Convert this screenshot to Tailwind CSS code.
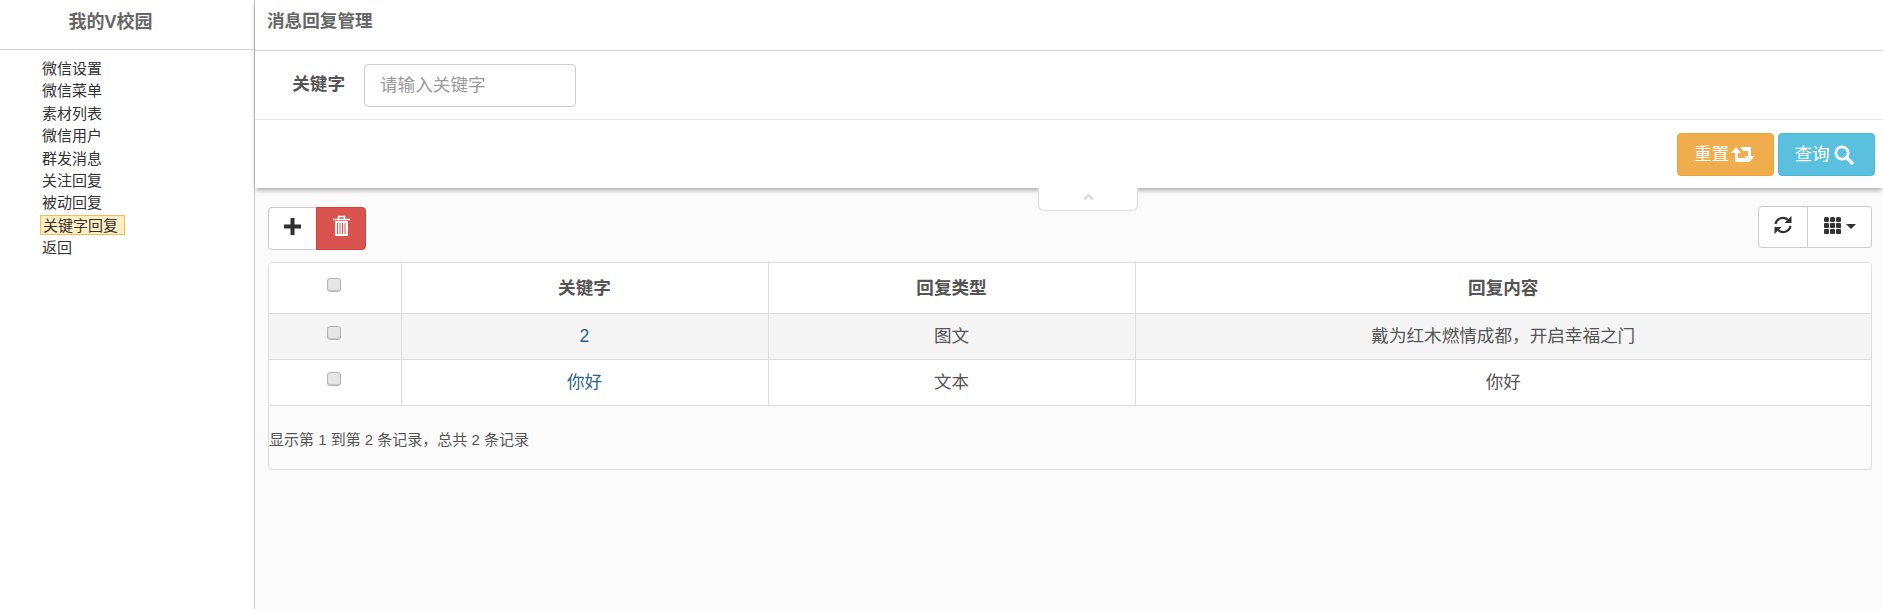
<!DOCTYPE html>
<html lang="zh">
<head>
  <meta charset="UTF-8" />
  <title>消息回复管理</title>
  <script src="https://cdn.jsdelivr.net/npm/@tailwindcss/browser@4"></script>
</head>
<body class="flex h-[609px] w-[1883px] overflow-hidden bg-white font-['Liberation_Sans','Noto_Sans_CJK_SC',sans-serif] text-[#333]">
  <!-- Sidebar -->
  <aside class="h-full w-[255px] shrink-0 border-r border-[#ccc] bg-white">
    <h2 class="h-[50px] border-b border-[#d4d4d4] pr-[33px] text-center text-[18px] leading-[44px] font-bold text-[#666]">我的V校园</h2>
    <ul class="pt-[8px] pl-[42px] text-[15px] leading-[22.4px] text-[#333]">
      <li>微信设置</li>
      <li>微信菜单</li>
      <li>素材列表</li>
      <li>微信用户</li>
      <li>群发消息</li>
      <li>关注回复</li>
      <li>被动回复</li>
      <li><span class="-ml-[2px] inline-block h-[20px] border border-[#ffb951] bg-[#ffeec2] pr-[6px] pl-[2px] leading-[19px]">关键字回复</span></li>
      <li>返回</li>
    </ul>
  </aside>

  <!-- Main Content -->
  <main class="flex h-full min-w-0 flex-1 flex-col bg-[#fbfbfb]">
    <div class="relative z-10 bg-white shadow-[0_3px_5px_-1px_rgba(0,0,0,0.35)]">
      <h1 class="h-[51px] border-b border-[#d4d4d4] pl-[12px] text-[17.6px] leading-[42px] font-bold text-[#666]">消息回复管理</h1>
      <div class="flex h-[69px] items-start border-b border-[#e5e5e5] pt-[13px]">
        <label class="w-[90px] text-right text-[17.6px] leading-[40px] font-bold text-[#555]">关键字</label>
        <input type="text" placeholder="请输入关键字" class="ml-[19px] h-[43px] w-[212px] rounded-[4px] border border-[#ccc] bg-white px-[15px] text-[17.6px] placeholder:text-[#999]" />
      </div>
      <div class="flex h-[68px] justify-end gap-[4px] pt-[13px] pr-[8px]">
        <button class="flex h-[43px] w-[97px] items-center justify-center gap-[2px] rounded-[4px] border border-[#eea236] bg-[#f0ad4e] pr-[2px] text-[17.6px] text-white">
          重置
          <svg width="24" height="15" viewBox="0 0 24 15" fill="#fff"><path d="M0 6 5 0l5 6H7v5h8l3 4H5.500Q4 15 4 14V6Z"/><path d="M9 0h10q1 0 1 1v8h3.500l-5 6-5-6h3.500V4H12Z"/></svg>
        </button>
        <button class="flex h-[43px] w-[97px] items-center justify-center gap-[4px] rounded-[4px] border border-[#46b8da] bg-[#5bc0de] pr-[5px] text-[17.6px] text-white">
          查询
          <svg width="20" height="20" viewBox="0 0 20 20" fill="none" stroke="#fff"><circle cx="8" cy="8" r="6.200" stroke-width="2.800"/><path d="m12.500 12.500 5.500 5.500" stroke-width="3.400" stroke-linecap="round"/></svg>
        </button>
      </div>
      <!-- collapse handle -->
      <div class="absolute top-full left-[783px] flex h-[23px] w-[100px] justify-center rounded-b-[6px] border border-t-0 border-[#ddd] bg-white pt-[5px]">
        <svg width="11" height="7" viewBox="0 0 11 7" fill="none" stroke="#ddd" stroke-width="2.500"><path d="m1 6.500 4.500-4.500 4.500 4.500"/></svg>
      </div>
    </div>

    <section class="pt-[19px] pr-[11px] pl-[13px]">
      <!-- Toolbar -->
      <div class="flex h-[43px] items-start justify-between">
        <div class="flex">
          <button class="flex h-[43px] w-[48px] items-start justify-center rounded-l-[4px] border border-r-0 border-[#ccc] bg-white pt-[10px]">
            <svg width="17" height="17" viewBox="0 0 17 17" fill="#333"><path d="M6.500 0h4v6.500H17v4h-6.500V17h-4v-6.500H0v-4h6.500Z"/></svg>
          </button>
          <button class="flex h-[43px] w-[50px] items-start justify-center rounded-r-[4px] border border-[#d43f3a] bg-[#d9534f] pt-[7px]">
            <svg width="17" height="21" viewBox="0 0 17 21" fill="none" stroke="#fff"><path d="M0 4.500h17" stroke-width="1.500"/><path d="M5.500 4V1.500h6V4" stroke-width="1.500"/><rect x="2" y="6" width="13" height="15" fill="#fff" stroke="none" rx="1"/><path d="M4.500 8v11M7 8v11M9.500 8v11M12 8v11" stroke="#d9534f" stroke-width="1"/></svg>
          </button>
        </div>
        <div class="-mt-px flex">
          <button class="flex h-[42px] w-[50px] items-start justify-center rounded-l-[4px] border border-[#ccc] bg-white pt-[9px]">
            <svg width="18" height="18" viewBox="0 0 18 18" fill="none" stroke="#333" stroke-width="2.200"><path d="M1.500 8a7.500 7.500 0 0 1 12.500-4"/><path d="M16.500 10a7.500 7.500 0 0 1-12.500 4"/><path d="M17.500 0v7h-7z" fill="#333" stroke="none"/><path d="M.5 18v-7h7z" fill="#333" stroke="none"/></svg>
          </button>
          <button class="flex h-[42px] w-[64px] items-start justify-center gap-[5px] rounded-r-[4px] border border-l-0 border-[#ccc] bg-white pt-[10px]">
            <svg width="17" height="17" viewBox="0 0 17 17" fill="#333"><rect width="5" height="5" rx="1.500"/><rect x="6" width="5" height="5" rx="1.500"/><rect x="12" width="5" height="5" rx="1.500"/><rect y="6" width="5" height="5" rx="1"/><rect x="6" y="6" width="5" height="5" rx="1"/><rect x="12" y="6" width="5" height="5" rx="1"/><rect y="12" width="5" height="5" rx="1"/><rect x="6" y="12" width="5" height="5" rx="1"/><rect x="12" y="12" width="5" height="5" rx="1"/></svg>
            <span class="mt-[7px] h-0 w-0 border-x-[5px] border-t-[5px] border-x-transparent border-t-[#333]"></span>
          </button>
        </div>
      </div>

      <!-- Table -->
      <div class="mt-[12px] h-[208px] overflow-hidden rounded-[4px] border border-[#ddd]">
        <table class="w-full table-fixed border-collapse text-center text-[17.6px] text-[#555]">
          <colgroup>
            <col class="w-[132px]" /><col class="w-[367px]" /><col class="w-[367px]" /><col />
          </colgroup>
          <thead>
            <tr class="h-[50px] border-b border-[#ddd] bg-white">
              <th class="border-r border-[#ddd] pr-[2px] align-top"><input type="checkbox" class="mt-[15px] size-[14px] appearance-none rounded-[3px] border border-[#b5b5b5] bg-[#e6e6e6] shadow-[inset_0_-1px_1px_rgba(0,0,0,0.15)]" /></th>
              <th class="border-r border-[#ddd] pt-px font-bold">关键字</th>
              <th class="border-r border-[#ddd] pt-px font-bold">回复类型</th>
              <th class="pt-px font-bold">回复内容</th>
            </tr>
          </thead>
          <tbody>
            <tr class="h-[46px] border-b border-[#ddd] bg-[#f5f5f5]">
              <td class="border-r border-[#ddd] pr-[2px] align-top"><input type="checkbox" class="mt-[12px] size-[14px] appearance-none rounded-[3px] border border-[#b5b5b5] bg-[#e6e6e6] shadow-[inset_0_-1px_1px_rgba(0,0,0,0.15)]" /></td>
              <td class="border-r border-[#ddd] text-[#2a6496]">2</td>
              <td class="border-r border-[#ddd]">图文</td>
              <td>戴为红木燃情成都，开启幸福之门</td>
            </tr>
            <tr class="h-[46px] border-b border-[#ddd] bg-white">
              <td class="border-r border-[#ddd] pr-[2px] align-top"><input type="checkbox" class="mt-[12px] size-[14px] appearance-none rounded-[3px] border border-[#b5b5b5] bg-[#e6e6e6] shadow-[inset_0_-1px_1px_rgba(0,0,0,0.15)]" /></td>
              <td class="border-r border-[#ddd] text-[#2a6496]">你好</td>
              <td class="border-r border-[#ddd]">文本</td>
              <td>你好</td>
            </tr>
          </tbody>
        </table>
        <p class="pt-[24px] text-[15px] leading-[20px] text-[#555]">显示第 1 到第 2 条记录，总共 2 条记录</p>
      </div>
    </section>
  </main>
</body>
</html>
